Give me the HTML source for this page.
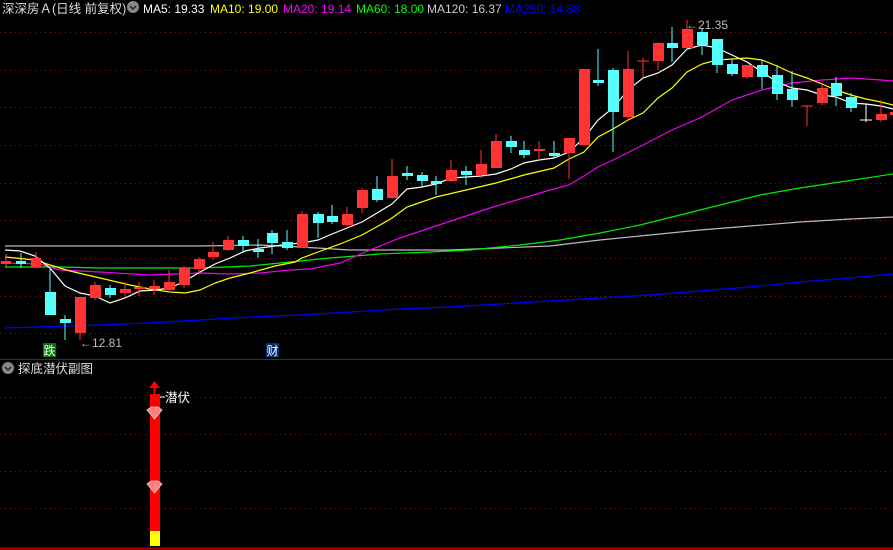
<!DOCTYPE html>
<html><head><meta charset="utf-8"><style>
html,body{margin:0;padding:0;background:#000;width:893px;height:550px;overflow:hidden}
svg{display:block}
text{font-family:"Liberation Sans","Noto Sans CJK SC",sans-serif}
</style></head><body>
<svg width="893" height="550" viewBox="0 0 893 550" xmlns="http://www.w3.org/2000/svg">
<rect width="893" height="550" fill="#000"/>
<g stroke="#8a1010" stroke-width="1" stroke-dasharray="1,4">
<line x1="0" y1="32.5" x2="893" y2="32.5"/><line x1="0" y1="70.5" x2="893" y2="70.5"/>
<line x1="0" y1="107.5" x2="893" y2="107.5"/><line x1="0" y1="145.5" x2="893" y2="145.5"/>
<line x1="0" y1="183.5" x2="893" y2="183.5"/><line x1="0" y1="220.5" x2="893" y2="220.5"/>
<line x1="0" y1="258.5" x2="893" y2="258.5"/><line x1="0" y1="296.5" x2="893" y2="296.5"/>
<line x1="0" y1="333.5" x2="893" y2="333.5"/>
<line x1="0" y1="397.5" x2="893" y2="397.5"/><line x1="0" y1="434.5" x2="893" y2="434.5"/>
<line x1="0" y1="471.5" x2="893" y2="471.5"/><line x1="0" y1="508.5" x2="893" y2="508.5"/>
</g>
<line x1="0" y1="359.5" x2="893" y2="359.5" stroke="#b00000"/>
<line x1="0" y1="548.5" x2="893" y2="548.5" stroke="#b00000" stroke-width="2"/>

<!-- MAs -->
<g fill="none" stroke-width="1.2">
<polyline stroke="#0000ff" points="5,328 100,325 150,323 200,320 250,317 300,315 350,312 400,309 450,307 500,304 550,301 600,298 650,295 700,291 750,287 800,282 850,278 893,274"/>
<polyline stroke="#bbbbbb" points="5,246 100,246 200,246 260,245 300,247 350,250 400,250 450,250 500,248 550,246 600,240 650,235 700,230 750,226 800,222 850,219 893,217"/>
<polyline stroke="#00ee00" points="5,267 60,267 100,268 150,268 200,268 250,266 290,262 330,258 380,254 430,252 470,250 520,245 560,240 600,233 640,225 680,215 720,205 760,195 800,188 840,182 893,174"/>
<polyline stroke="#ee00ee" points="5,263 40,264 60,270 100,272 150,275 200,273 230,274 260,273 290,270 310,269 340,263 370,250 400,238 430,228 460,218 490,208 520,199 550,190 569,185 584,176 598,167 613,160 643,145 672,130 702,117 732,100 762,90 792,83 822,80 851,78 881,80 893,81"/>
<polyline stroke="#ffff00" points="5,257 35,260 50,265 70,271 100,278 130,285 150,289 170,292 185,293 200,290 215,283 230,278 250,273 275,266 295,262 302,258 318,252 340,244 362,235 380,225 392,218 407,207 436,197 466,190 496,183 524,175 554,168 569,159 584,152 598,137 613,129 628,120 643,113 658,98 672,88 687,72 702,64 717,60 732,59 747,58 762,60 777,66 792,73 807,78 822,84 836,90 851,95 866,99 881,102 893,105"/>
<polyline stroke="#ffffff" points="5,250 20,251 35,256 50,268 65,286 80,293 95,296 110,303 125,298 140,291 155,290 170,288 185,281 200,272 215,264 230,258 245,251 260,248 275,246 290,244 302,243 318,240 332,234 347,228 362,222 377,213 392,204 407,189 422,187 436,184 451,178 466,177 481,176 496,174 511,169 524,163 539,160 554,158 569,152 584,138 598,120 613,108 628,90 643,78 658,73 672,65 687,49 702,45 717,48 732,55 747,62 762,72 777,82 792,88 807,90 822,95 836,97 851,103 866,104 881,106 893,109"/>
</g>

<!-- candles -->
<g id="c">
<!-- red: wick + body -->
<g fill="#ff3333" stroke="#ff3333">
<line x1="6" y1="254" x2="6" y2="268"/><rect x="1" y="261" width="10" height="3" stroke="none"/>
<line x1="36" y1="252" x2="36" y2="268"/><rect x="31" y="258" width="10" height="9" stroke="none"/>
<line x1="80" y1="297" x2="80" y2="340"/><rect x="75" y="297" width="11" height="36" stroke="none"/>
<line x1="95" y1="282" x2="95" y2="300"/><rect x="90" y="285" width="11" height="13" stroke="none"/>
<line x1="125" y1="282" x2="125" y2="297"/><rect x="120" y="289" width="11" height="4" stroke="none"/>
<line x1="139" y1="282" x2="139" y2="296"/><rect x="134" y="287" width="11" height="2" stroke="none"/>
<line x1="154" y1="280" x2="154" y2="295"/><rect x="149" y="286" width="11" height="3" stroke="none"/>
<line x1="169" y1="270" x2="169" y2="292"/><rect x="164" y="282" width="11" height="8" stroke="none"/>
<line x1="184" y1="266" x2="184" y2="288"/><rect x="179" y="268" width="11" height="17" stroke="none"/>
<line x1="199" y1="257" x2="199" y2="274"/><rect x="194" y="259" width="11" height="10" stroke="none"/>
<line x1="213" y1="242" x2="213" y2="260"/><rect x="208" y="252" width="11" height="5" stroke="none"/>
<line x1="228" y1="236" x2="228" y2="251"/><rect x="223" y="240" width="11" height="10" stroke="none"/>
<line x1="302" y1="211" x2="302" y2="248"/><rect x="297" y="214" width="11" height="34" stroke="none"/>
<line x1="347" y1="207" x2="347" y2="228"/><rect x="342" y="214" width="11" height="11" stroke="none"/>
<line x1="362" y1="188" x2="362" y2="213"/><rect x="357" y="190" width="11" height="18" stroke="none"/>
<line x1="392" y1="159" x2="392" y2="199"/><rect x="387" y="176" width="11" height="22" stroke="none"/>
<line x1="451" y1="160" x2="451" y2="182"/><rect x="446" y="170" width="11" height="11" stroke="none"/>
<line x1="481" y1="150" x2="481" y2="178"/><rect x="476" y="164" width="11" height="11" stroke="none"/>
<line x1="496" y1="134" x2="496" y2="168"/><rect x="491" y="141" width="11" height="27" stroke="none"/>
<line x1="539" y1="141" x2="539" y2="160"/><rect x="534" y="149" width="11" height="2" stroke="none"/>
<line x1="569" y1="138" x2="569" y2="179"/><rect x="564" y="138" width="11" height="15" stroke="none"/>
<rect x="579" y="69" width="11" height="76" stroke="none"/>
<line x1="628" y1="51" x2="628" y2="121"/><rect x="623" y="69" width="11" height="48" stroke="none"/>
<line x1="643" y1="58" x2="643" y2="77"/><line x1="637" y1="61" x2="649" y2="61"/>
<line x1="658" y1="42" x2="658" y2="70"/><rect x="653" y="43" width="11" height="18" stroke="none"/>
<line x1="687" y1="20" x2="687" y2="48"/><rect x="682" y="29" width="11" height="19" stroke="none"/>
<line x1="747" y1="65" x2="747" y2="79"/><rect x="742" y="65" width="11" height="12" stroke="none"/>
<line x1="807" y1="105" x2="807" y2="126"/><line x1="801" y1="106" x2="813" y2="106"/>
<line x1="822" y1="82" x2="822" y2="105"/><rect x="817" y="88" width="11" height="15" stroke="none"/>
<line x1="881" y1="100" x2="881" y2="122"/><rect x="876" y="114" width="11" height="6" stroke="none"/>
<rect x="890" y="112" width="3" height="3" stroke="none"/>
</g>
<g fill="#55ffff" stroke="#55ffff">
<line x1="21" y1="253" x2="21" y2="268"/><rect x="16" y="261" width="10" height="3" stroke="none"/>
<line x1="50" y1="268" x2="50" y2="315"/><rect x="45" y="292" width="11" height="23" stroke="none"/>
<line x1="65" y1="315" x2="65" y2="340"/><rect x="60" y="319" width="11" height="4" stroke="none"/>
<line x1="110" y1="285" x2="110" y2="298"/><rect x="105" y="288" width="11" height="7" stroke="none"/>
<line x1="243" y1="236" x2="243" y2="253"/><rect x="238" y="240" width="11" height="6" stroke="none"/>
<line x1="258" y1="239" x2="258" y2="258"/><rect x="253" y="249" width="11" height="3" stroke="none"/>
<line x1="272" y1="230" x2="272" y2="254"/><rect x="267" y="233" width="11" height="10" stroke="none"/>
<line x1="287" y1="230" x2="287" y2="250"/><rect x="282" y="242" width="11" height="6" stroke="none"/>
<line x1="318" y1="212" x2="318" y2="238"/><rect x="313" y="214" width="11" height="9" stroke="none"/>
<line x1="332" y1="205" x2="332" y2="224"/><rect x="327" y="216" width="11" height="6" stroke="none"/>
<line x1="377" y1="176" x2="377" y2="202"/><rect x="372" y="189" width="11" height="11" stroke="none"/>
<line x1="407" y1="166" x2="407" y2="180"/><rect x="402" y="173" width="11" height="3" stroke="none"/>
<line x1="422" y1="172" x2="422" y2="187"/><rect x="417" y="175" width="11" height="6" stroke="none"/>
<line x1="436" y1="176" x2="436" y2="195"/><rect x="431" y="181" width="11" height="3" stroke="none"/>
<line x1="466" y1="166" x2="466" y2="185"/><rect x="461" y="171" width="11" height="4" stroke="none"/>
<line x1="511" y1="136" x2="511" y2="153"/><rect x="506" y="141" width="11" height="6" stroke="none"/>
<line x1="524" y1="141" x2="524" y2="158"/><rect x="519" y="150" width="11" height="5" stroke="none"/>
<line x1="554" y1="141" x2="554" y2="158"/><rect x="549" y="153" width="11" height="3" stroke="none"/>
<line x1="598" y1="49" x2="598" y2="86"/><rect x="593" y="80" width="11" height="3" stroke="none"/>
<line x1="613" y1="68" x2="613" y2="152"/><rect x="608" y="70" width="11" height="42" stroke="none"/>
<line x1="672" y1="27" x2="672" y2="62"/><rect x="667" y="43" width="11" height="5" stroke="none"/>
<line x1="702" y1="29" x2="702" y2="55"/><rect x="697" y="32" width="11" height="13" stroke="none"/>
<line x1="717" y1="39" x2="717" y2="73"/><rect x="712" y="39" width="11" height="26" stroke="none"/>
<line x1="732" y1="59" x2="732" y2="76"/><rect x="727" y="64" width="11" height="10" stroke="none"/>
<line x1="762" y1="60" x2="762" y2="89"/><rect x="757" y="65" width="11" height="12" stroke="none"/>
<line x1="777" y1="65" x2="777" y2="100"/><rect x="772" y="75" width="11" height="19" stroke="none"/>
<line x1="792" y1="71" x2="792" y2="107"/><rect x="787" y="89" width="11" height="11" stroke="none"/>
<line x1="836" y1="77" x2="836" y2="106"/><rect x="831" y="83" width="11" height="13" stroke="none"/>
<line x1="851" y1="93" x2="851" y2="112"/><rect x="846" y="97" width="11" height="11" stroke="none"/>
</g>
<g stroke="#ffffff"><line x1="866" y1="104" x2="866" y2="122"/><line x1="860" y1="120" x2="872" y2="120"/></g>
</g>

<!-- labels -->
<text x="2" y="13" font-size="12.5" fill="#dddddd">深深房Ａ(日线 前复权)</text>
<circle cx="133" cy="7" r="6" fill="#888"/><path d="M130 6 L133 9 L136 6" stroke="#222" stroke-width="1.5" fill="none"/>
<text x="143" y="13" font-size="12" fill="#ffffff">MA5: 19.33</text>
<text x="210" y="13" font-size="12" fill="#ffff00">MA10: 19.00</text>
<text x="283" y="13" font-size="12" fill="#ff00ff">MA20: 19.14</text>
<text x="356" y="13" font-size="12" fill="#00ff00">MA60: 18.00</text>
<text x="427" y="13" font-size="12" fill="#cccccc">MA120: 16.37</text>
<text x="505" y="13" font-size="12" fill="#0000ff">MA250: 14.88</text>
<text x="686" y="29" font-size="12" fill="#bbbbbb">←21.35</text>
<text x="80" y="347" font-size="12" fill="#bbbbbb">←12.81</text>
<rect x="43" y="343" width="13" height="14" fill="#007700"/>
<text x="43.5" y="355" font-size="12" fill="#ffffff">跌</text>
<rect x="266" y="343" width="13" height="14" fill="#003070"/>
<text x="266.5" y="355" font-size="12" fill="#ffffff">财</text>
<circle cx="8" cy="368" r="6" fill="#888"/><path d="M5 367 L8 370 L11 367" stroke="#222" stroke-width="1.5" fill="none"/>
<text x="18" y="373" font-size="12.5" fill="#dddddd">探底潜伏副图</text>

<!-- sub indicator -->
<rect x="150" y="394" width="10" height="138" fill="#ff0000"/>
<rect x="150" y="531" width="10" height="15" fill="#ffff00"/>
<line x1="154.5" y1="386" x2="154.5" y2="395" stroke="#ff0000" stroke-width="2"/>
<path d="M149 388 L154.5 381 L160 388 Z" fill="#ff0000"/>
<line x1="160" y1="397" x2="165" y2="397" stroke="#fff"/>
<text x="165" y="402" font-size="12.5" fill="#ffffff">潜伏</text>
<path d="M147 410 L151 407 L158 407 L162 410 L154.5 419 Z" fill="#ff8080" stroke="#ffc0c0" stroke-width="0.8"/>
<path d="M147 484 L151 481 L158 481 L162 484 L154.5 493 Z" fill="#ff8080" stroke="#ffc0c0" stroke-width="0.8"/>
</svg>
</body></html>
